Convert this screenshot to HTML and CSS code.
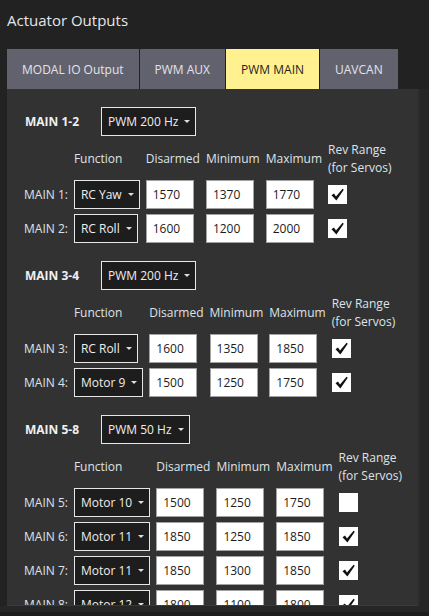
FILE: index.html
```html
<!DOCTYPE html>
<html>
<head>
<meta charset="utf-8">
<link rel="stylesheet" href="styles.css">
</head>
<body>
<div class="page">
  <h1 class="title">Actuator Outputs</h1>
  <div class="tabs">
    <div class="tab">MODAL IO Output</div>
    <div class="tab">PWM AUX</div>
    <div class="tab active">PWM MAIN</div>
    <div class="tab">UAVCAN</div>
  </div>
  <div class="frame">
    <div class="panel">
      <section class="group">
        <div class="group-head">
          <span class="group-title">MAIN 1-2</span>
          <div class="select">PWM 200 Hz<span class="caret"></span></div>
        </div>
        <table class="ch-table">
          <thead><tr><th></th><th>Function</th><th>Disarmed</th><th>Minimum</th><th>Maximum</th><th>Rev Range<br>(for Servos)</th></tr></thead>
          <tbody>
            <tr><td class="lbl">MAIN 1:</td><td><div class="select">RC Yaw<span class="caret"></span></div></td><td><div class="num">1570</div></td><td><div class="num">1370</div></td><td><div class="num">1770</div></td><td><span class="chk on"><svg viewBox="0 0 19 19"><path d="M3.5 10.2 L6 8.6 L8 11.6 L14.6 3.8 L15.8 4.8 L8.4 15.6 Z"/></svg></span></td></tr>
            <tr><td class="lbl">MAIN 2:</td><td><div class="select">RC Roll<span class="caret"></span></div></td><td><div class="num">1600</div></td><td><div class="num">1200</div></td><td><div class="num">2000</div></td><td><span class="chk on"><svg viewBox="0 0 19 19"><path d="M3.5 10.2 L6 8.6 L8 11.6 L14.6 3.8 L15.8 4.8 L8.4 15.6 Z"/></svg></span></td></tr>
          </tbody>
        </table>
      </section>
      <section class="group">
        <div class="group-head">
          <span class="group-title">MAIN 3-4</span>
          <div class="select">PWM 200 Hz<span class="caret"></span></div>
        </div>
        <table class="ch-table">
          <thead><tr><th></th><th>Function</th><th>Disarmed</th><th>Minimum</th><th>Maximum</th><th>Rev Range<br>(for Servos)</th></tr></thead>
          <tbody>
            <tr><td class="lbl">MAIN 3:</td><td><div class="select">RC Roll<span class="caret"></span></div></td><td><div class="num">1600</div></td><td><div class="num">1350</div></td><td><div class="num">1850</div></td><td><span class="chk on"><svg viewBox="0 0 19 19"><path d="M3.5 10.2 L6 8.6 L8 11.6 L14.6 3.8 L15.8 4.8 L8.4 15.6 Z"/></svg></span></td></tr>
            <tr><td class="lbl">MAIN 4:</td><td><div class="select">Motor 9<span class="caret"></span></div></td><td><div class="num">1500</div></td><td><div class="num">1250</div></td><td><div class="num">1750</div></td><td><span class="chk on"><svg viewBox="0 0 19 19"><path d="M3.5 10.2 L6 8.6 L8 11.6 L14.6 3.8 L15.8 4.8 L8.4 15.6 Z"/></svg></span></td></tr>
          </tbody>
        </table>
      </section>
      <section class="group">
        <div class="group-head">
          <span class="group-title">MAIN 5-8</span>
          <div class="select">PWM 50 Hz<span class="caret"></span></div>
        </div>
        <table class="ch-table">
          <thead><tr><th></th><th>Function</th><th>Disarmed</th><th>Minimum</th><th>Maximum</th><th>Rev Range<br>(for Servos)</th></tr></thead>
          <tbody>
            <tr><td class="lbl">MAIN 5:</td><td><div class="select">Motor 10<span class="caret"></span></div></td><td><div class="num">1500</div></td><td><div class="num">1250</div></td><td><div class="num">1750</div></td><td><span class="chk"></span></td></tr>
            <tr><td class="lbl">MAIN 6:</td><td><div class="select">Motor 11<span class="caret"></span></div></td><td><div class="num">1850</div></td><td><div class="num">1250</div></td><td><div class="num">1850</div></td><td><span class="chk on"><svg viewBox="0 0 19 19"><path d="M3.5 10.2 L6 8.6 L8 11.6 L14.6 3.8 L15.8 4.8 L8.4 15.6 Z"/></svg></span></td></tr>
            <tr><td class="lbl">MAIN 7:</td><td><div class="select">Motor 11<span class="caret"></span></div></td><td><div class="num">1850</div></td><td><div class="num">1300</div></td><td><div class="num">1850</div></td><td><span class="chk on"><svg viewBox="0 0 19 19"><path d="M3.5 10.2 L6 8.6 L8 11.6 L14.6 3.8 L15.8 4.8 L8.4 15.6 Z"/></svg></span></td></tr>
            <tr><td class="lbl">MAIN 8:</td><td><div class="select">Motor 12<span class="caret"></span></div></td><td><div class="num">1800</div></td><td><div class="num">1100</div></td><td><div class="num">1800</div></td><td><span class="chk on"><svg viewBox="0 0 19 19"><path d="M3.5 10.2 L6 8.6 L8 11.6 L14.6 3.8 L15.8 4.8 L8.4 15.6 Z"/></svg></span></td></tr>
          </tbody>
        </table>
      </section>
    </div>
    <div class="scroll-track"></div>
  </div>
  <div class="bottom-bar"></div>
</div>
</body>
</html>
```
FILE: styles.css
```css
html, body {
  margin: 0;
  padding: 0;
  background: #222222;
  overflow: hidden;
}
body {
  font-family: "Open Sans", "DejaVu Sans", sans-serif;
  font-size: 12px;
  color: #dfe3e8;
}
.page {
  width: 429px;
  height: 616px;
  display: flex;
  flex-direction: column;
  overflow: hidden;
}
.title {
  margin: 9px 0 18px 7px;
  font-size: 15px;
  font-weight: 400;
  line-height: 22px;
  color: #e4e6ea;
}
.tabs {
  display: flex;
  gap: 1px;
  margin-left: 7px;
  height: 40px;
}
.tab {
  background: #62626e;
  color: #e2e2ec;
  padding: 0 15px;
  display: flex;
  align-items: center;
  font-size: 12px;
}
.tab.active {
  background: #fff18f;
  color: #1e1e1e;
}
.frame {
  display: flex;
  height: 517px;
}
.panel {
  margin-left: 7px;
  width: 411px;
  padding: 18px 0 0 12px;
  background: #323232;
  overflow: hidden;
  border-bottom: 1px solid #3a3a3a;
  box-sizing: border-box;
}
.scroll-track {
  flex: 1;
  background: #262626;
  border-left: 2px solid #2b2b2b;
}
.bottom-bar {
  height: 6px;
  background: #262626;
  border-bottom: 4px solid #1d1d1d;
}
.group {
  margin-bottom: 18px;
}
.group-head {
  display: flex;
  align-items: center;
  padding-left: 6px;
  margin-bottom: 5px;
}
.group-title {
  width: 76px;
  font-weight: 700;
  color: #eef0f3;
}
.select {
  display: inline-flex;
  align-items: center;
  height: 29px;
  box-sizing: border-box;
  border: 1px solid #e6e6e6;
  background: #1d1d1d;
  color: #eeeeee;
  padding: 0 5px 0 6px;
  white-space: nowrap;
}
.caret {
  width: 0;
  height: 0;
  margin-left: 6px;
  border-left: 3px solid transparent;
  border-right: 3px solid transparent;
  border-top: 3px solid #dddddd;
}
.ch-table {
  border-collapse: separate;
  border-spacing: 6px 0;
  margin-left: -1px;
}
.ch-table th {
  font-weight: 400;
  text-align: left;
  line-height: 18px;
  padding: 0;
  white-space: nowrap;
  vertical-align: middle;
  color: #dfe3e8;
}
.ch-table td {
  padding: 5px 0 0 0;
  vertical-align: middle;
  white-space: nowrap;
}
.ch-table td.lbl {
  padding-right: 0;
}
.ch-table tbody tr:first-child td {
  padding-top: 3px;
}
.lbl {
  color: #dfe3e8;
}
.num {
  width: 48px;
  height: 29px;
  box-sizing: border-box;
  background: #ffffff;
  border: 1px solid #a2a2a2;
  color: #1c1c1c;
  padding-left: 6px;
  line-height: 27px;
}
.chk {
  display: block;
  width: 19px;
  height: 19px;
  background: #ffffff;
}
.chk svg {
  display: block;
  width: 19px;
  height: 19px;
  fill: #111111;
}
```
